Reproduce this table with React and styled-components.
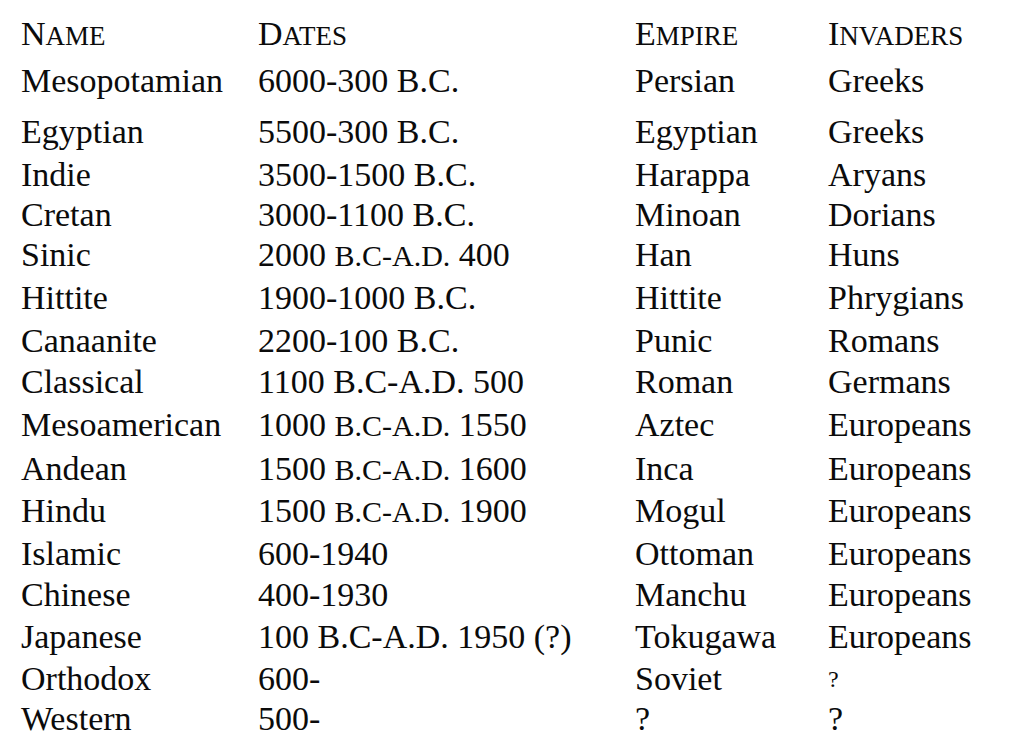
import React from "react";
import styled, { createGlobalStyle } from "styled-components";

const Global = createGlobalStyle`
  html, body { margin: 0; padding: 0; background: #ffffff; }
  body { font-family: "Liberation Serif", "Times New Roman", serif; color: #0b0b0b; }
`;

const Page = styled.div`
  width: 1012px;
  height: 756px;
  overflow: hidden;
  box-sizing: border-box;
  padding: 14px 0 0 21px;
  background: #fff;
`;

const Table = styled.div`
  display: flex;
  flex-direction: column;
`;

const Row = styled.div`
  display: grid;
  grid-template-columns: 237px 377px 193px 1fr;
  align-items: end;
  height: ${(p) => p.$h}px;
  font-size: 34px;
  line-height: 40px;
  white-space: nowrap;
`;

const Cell = styled.div`
  height: 40px;
`;

const Sc = styled.span`
  font-size: ${(p) => p.$size || 27}px;
  text-transform: uppercase;
`;

const Small = styled.span`
  font-size: 24px;
  vertical-align: 8px;
`;

const Heading = ({ children }) => (
  <Cell>
    {children[0]}
    <Sc>{children.slice(1)}</Sc>
  </Cell>
);

const era = (a, b) => (
  <>
    {a} <Sc $size={30}>b.c-a.d.</Sc> {b}
  </>
);

const rows = [
  { h: 47, c: ["Mesopotamian", "6000-300 B.C.", "Persian", "Greeks"] },
  { h: 51, c: ["Egyptian", "5500-300 B.C.", "Egyptian", "Greeks"] },
  { h: 43, c: ["Indie", "3500-1500 B.C.", "Harappa", "Aryans"] },
  { h: 40, c: ["Cretan", "3000-1100 B.C.", "Minoan", "Dorians"] },
  { h: 40, c: ["Sinic", era("2000", "400"), "Han", "Huns"] },
  { h: 43, c: ["Hittite", "1900-1000 B.C.", "Hittite", "Phrygians"] },
  { h: 43, c: ["Canaanite", "2200-100 B.C.", "Punic", "Romans"] },
  { h: 41, c: ["Classical", "1100 B.C-A.D. 500", "Roman", "Germans"] },
  { h: 43, c: ["Mesoamerican", era("1000", "1550"), "Aztec", "Europeans"] },
  { h: 44, c: ["Andean", era("1500", "1600"), "Inca", "Europeans"] },
  { h: 42, c: ["Hindu", era("1500", "1900"), "Mogul", "Europeans"] },
  { h: 43, c: ["Islamic", "600-1940", "Ottoman", "Europeans"] },
  { h: 41, c: ["Chinese", "400-1930", "Manchu", "Europeans"] },
  { h: 42, c: ["Japanese", "100 B.C-A.D. 1950 (?)", "Tokugawa", "Europeans"] },
  { h: 42, c: ["Orthodox", "600-", "Soviet", <Small>?</Small>] },
  { h: 40, c: ["Western", "500-", "?", "?"] },
];

export default function App() {
  return (
    <>
      <Global />
      <Page>
        <Table>
          <Row $h={40}>
            <Heading>Name</Heading>
            <Heading>Dates</Heading>
            <Heading>Empire</Heading>
            <Heading>Invaders</Heading>
          </Row>
          {rows.map((r, i) => (
            <Row key={i} $h={r.h}>
              {r.c.map((c, j) => (
                <Cell key={j}>{c}</Cell>
              ))}
            </Row>
          ))}
        </Table>
      </Page>
    </>
  );
}
